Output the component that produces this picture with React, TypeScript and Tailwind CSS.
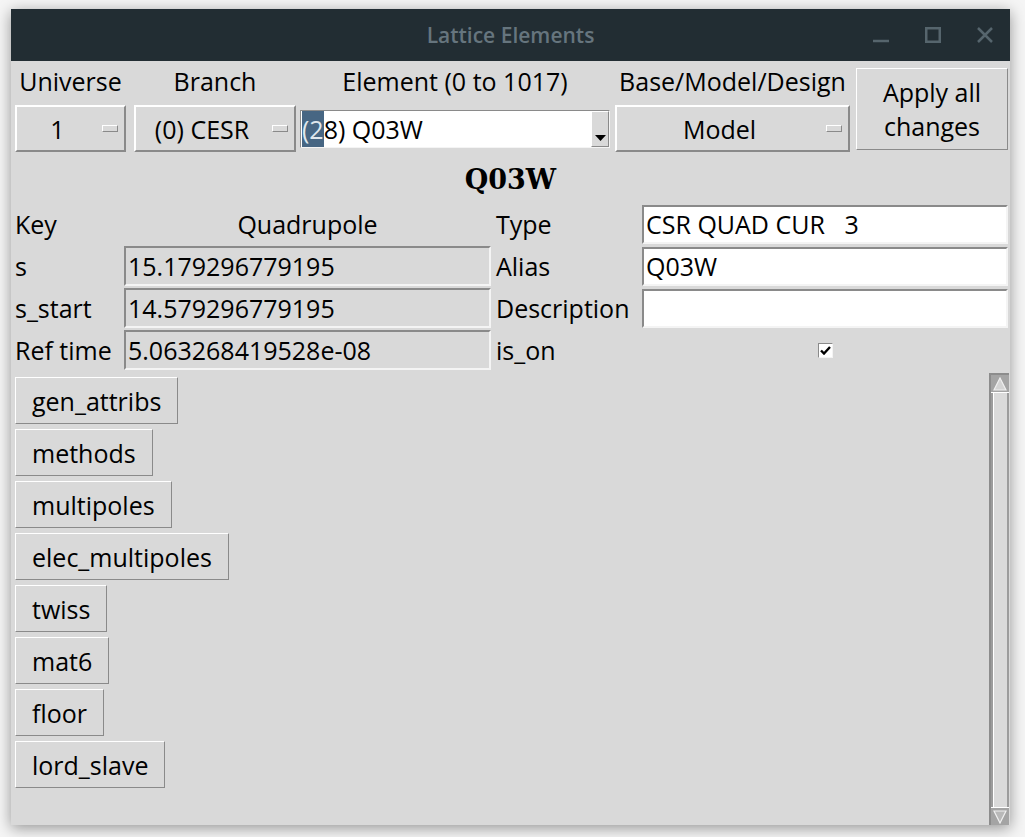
import React from "react";

const raised =
  "border-t-white border-l-white border-b-[#8a8a8a] border-r-[#8a8a8a]";
const sunken =
  "border-t-[#8a8a8a] border-l-[#8a8a8a] border-b-[#f4f4f4] border-r-[#f4f4f4]";

function MenuButton({ label, width }: { label: string; width: string }) {
  return (
    <div
      className={`${width} h-[47px] flex items-center bg-[#d9d9d9] border-2 ${raised}`}
    >
      <span className="flex-1 text-center whitespace-pre mr-[4px]">{label}</span>
      <span
        className={`w-[16px] h-[7px] mr-[6px] border ${raised} bg-[#d9d9d9]`}
      />
    </div>
  );
}

function ValueBox({ value }: { value: string }) {
  return (
    <div
      className={`w-full h-[40px] flex items-center pl-[2px] bg-[#d9d9d9] border-2 ${sunken}`}
    >
      {value}
    </div>
  );
}

function Entry({ value }: { value: string }) {
  return (
    <div
      className={`w-full h-[39px] flex items-center pl-[2px] bg-white border-2 ${sunken} whitespace-pre`}
    >
      {value}
    </div>
  );
}

function Row({
  label,
  middle,
  rightLabel,
  right,
}: {
  label: string;
  middle: React.ReactNode;
  rightLabel: string;
  right: React.ReactNode;
}) {
  return (
    <div className="flex h-[42px] items-center">
      <div className="w-[109px]">{label}</div>
      <div className="w-[367px] flex items-center justify-center">{middle}</div>
      <div className="w-[5px]" />
      <div className="w-[146px]">{rightLabel}</div>
      <div className="w-[366px] flex items-center justify-center">{right}</div>
    </div>
  );
}

const sections = [
  "gen_attribs",
  "methods",
  "multipoles",
  "elec_multipoles",
  "twiss",
  "mat6",
  "floor",
  "lord_slave",
];

export default function App() {
  return (
    <div className="w-[1025px] h-[837px] bg-[#f5f5f5] pt-[9px] pl-[11px] font-['Open_Sans',sans-serif] text-[25px] leading-[34px] text-black">
      <div className="w-[999px] h-[816px] flex flex-col bg-[#d9d9d9] shadow-[0_3px_14px_rgba(0,0,0,0.4)]">
        {/* Title bar */}
        <div className="h-[52px] shrink-0 bg-[#222d33] grid grid-cols-[1fr_auto_1fr] items-center">
          <div />
          <div className="text-[21px] font-semibold text-[#66757e]">
            Lattice Elements
          </div>
          <div className="flex justify-end items-center gap-[36px] pr-[17px]">
            <svg width="16" height="16" viewBox="0 0 16 16">
              <line x1="0" y1="14" x2="16" y2="14" stroke="#56656d" strokeWidth="2.5" />
            </svg>
            <svg width="16" height="16" viewBox="0 0 16 16">
              <rect x="1.25" y="1.25" width="13.5" height="13.5" fill="none" stroke="#56656d" strokeWidth="2.5" />
            </svg>
            <svg width="16" height="16" viewBox="0 0 16 16">
              <path d="M1 1L15 15M15 1L1 15" stroke="#56656d" strokeWidth="2.5" fill="none" />
            </svg>
          </div>
        </div>

        {/* Selectors */}
        <div className="flex pl-[4px] pr-[2px]">
          <div className="flex flex-col w-[111px]">
            <div className="h-[44px] pb-[4px] flex items-center justify-center">Universe</div>
            <MenuButton label="1" width="w-[111px]" />
          </div>
          <div className="flex flex-col w-[162px] ml-[8px]">
            <div className="h-[44px] pb-[4px] flex items-center justify-center">Branch</div>
            <MenuButton label="(0) CESR" width="w-[162px]" />
          </div>
          <div className="flex flex-col w-[310px] ml-[4px]">
            <div className="h-[44px] pb-[4px] flex items-center justify-center">
              Element (0 to 1017)
            </div>
            <div className="h-[47px] flex items-center">
              <div className={`w-full h-[38px] flex bg-white border ${sunken}`}>
                <div className="flex-1 flex items-stretch pl-[1px]">
                  <span className="flex items-center bg-[#476683] text-[#dfe6ec]">(2</span>
                  <span className="flex items-center">8) Q03W</span>
                </div>
                <div
                  className={`w-[18px] flex items-end justify-center pb-[5px] bg-[#d9d9d9] border ${raised}`}
                >
                  <svg width="11" height="6" viewBox="0 0 11 6">
                    <path d="M0 0H11L5.5 6Z" fill="#000" />
                  </svg>
                </div>
              </div>
            </div>
          </div>
          <div className="flex flex-col w-[235px] ml-[5px]">
            <div className="h-[44px] pb-[4px] flex items-center justify-center">
              Base/Model/Design
            </div>
            <MenuButton label="Model" width="w-[235px]" />
          </div>
          <div className="ml-[6px] pt-[7px]">
            <div
              className={`w-[152px] h-[82px] flex items-center justify-center text-center bg-[#d9d9d9] border ${raised}`}
            >
              Apply all
              <br />
              changes
            </div>
          </div>
        </div>

        {/* Element name */}
        <div className="h-[40px] mt-[8px] flex items-center justify-center font-['DejaVu_Serif',serif] font-bold text-[27px]">
          Q03W
        </div>

        {/* Attributes */}
        <div className="flex flex-col pl-[4px] mt-[3px]">
          <Row
            label="Key"
            middle={<span>Quadrupole</span>}
            rightLabel="Type"
            right={<Entry value="CSR QUAD CUR   3" />}
          />
          <Row
            label="s"
            middle={<ValueBox value="15.179296779195" />}
            rightLabel="Alias"
            right={<Entry value="Q03W" />}
          />
          <Row
            label="s_start"
            middle={<ValueBox value="14.579296779195" />}
            rightLabel="Description"
            right={<Entry value="" />}
          />
          <Row
            label="Ref time"
            middle={<ValueBox value="5.063268419528e-08" />}
            rightLabel="is_on"
            right={
              <div className={`w-[15px] h-[15px] bg-white border ${sunken} flex items-center justify-center`}>
                <svg width="11" height="9" viewBox="0 0 11 9">
                  <path d="M1 4.5L4 7.5L10 1" stroke="#000" strokeWidth="2.4" fill="none" />
                </svg>
              </div>
            }
          />
        </div>

        {/* Section buttons + scrollbar */}
        <div className="flex flex-1 min-h-0 mt-[2px] pr-[1px]">
          <div className="flex-1 flex flex-col items-start gap-[5px] pl-[4px] pt-[4px]">
            {sections.map((s) => (
              <div
                key={s}
                className={`h-[47px] flex items-center px-[16px] bg-[#d9d9d9] border ${raised}`}
              >
                {s}
              </div>
            ))}
          </div>
          <div className="w-[20px] flex flex-col border-t-2 border-l-2 border-[#8c8c8c] bg-[#d9d9d9]">
            <div className="h-[18px] shrink-0 bg-[#a4a4a4] border-b border-white flex items-center justify-center">
              <svg width="14" height="14" viewBox="0 0 14 14">
                <path d="M7 1L13 13H1Z" fill="#d4d4d4" stroke="#efefef" strokeWidth="1.2" />
              </svg>
            </div>
            <div className="flex-1 border-l-2 border-r-2 border-l-[#9c9c9c] border-r-[#9c9c9c] bg-[#dadada]">
              <div className="h-full border-l border-white" />
            </div>
            <div className="h-[18px] shrink-0 bg-[#a4a4a4] border-t border-white flex items-center justify-center">
              <svg width="14" height="14" viewBox="0 0 14 14">
                <path d="M1 1H13L7 13Z" fill="#b8b8b8" stroke="#efefef" strokeWidth="1.2" />
              </svg>
            </div>
          </div>
        </div>
      </div>
    </div>
  );
}
